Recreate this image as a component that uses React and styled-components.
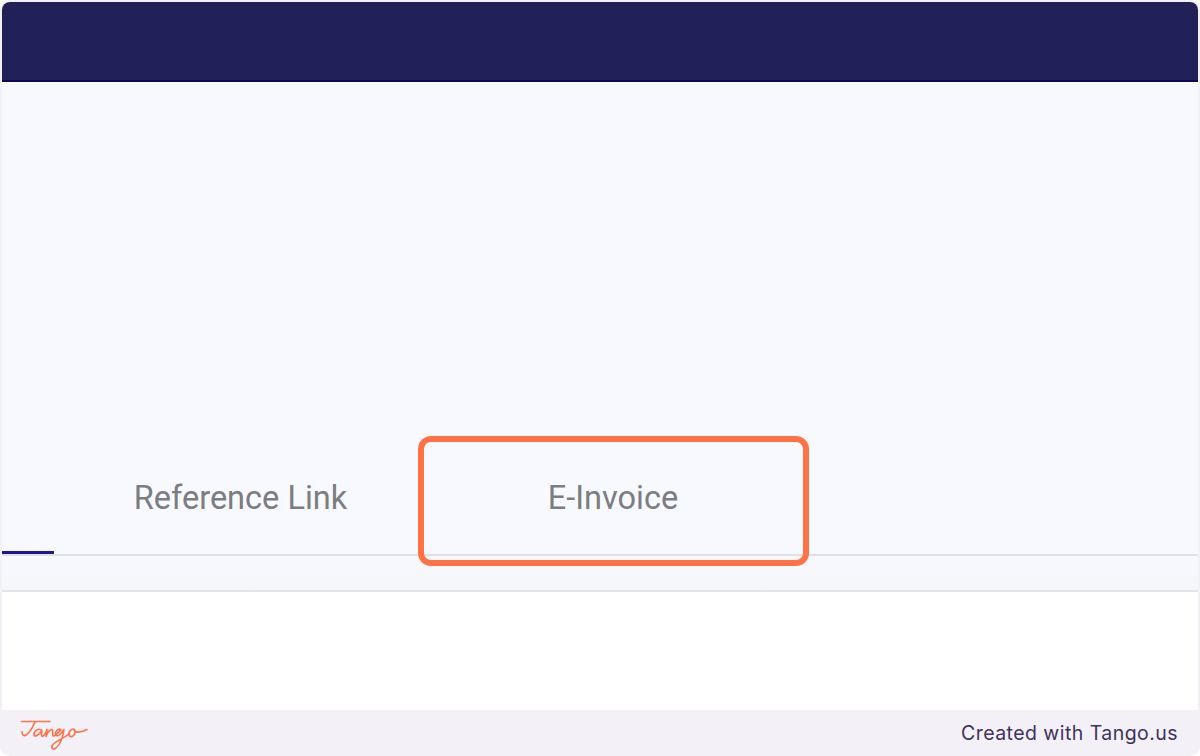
import React from "react";
import styled, { createGlobalStyle } from "styled-components";

const GlobalStyle = createGlobalStyle`
	html, body {
		margin: 0;
		padding: 0;
		background: #ffffff;
	}
`;

const Frame = styled.div`
	width: 1200px;
	height: 756px;
	box-sizing: border-box;
	padding: 2px 2px 0;
	display: flex;
	flex-direction: column;
	background: #f3f1f7;
	border-radius: 10px;
	overflow: hidden;
`;

const Screen = styled.div`
	height: 708px;
	display: flex;
	flex-direction: column;
	background: #ffffff;
	border-radius: 8px 8px 0 0;
	overflow: hidden;
`;

const Header = styled.div`
	height: 78px;
	flex-shrink: 0;
	background: #222059;
	border-bottom: 2px solid #0d0a52;
`;

const Content = styled.div`
	height: 508px;
	flex-shrink: 0;
	display: flex;
	flex-direction: column;
	justify-content: flex-end;
	background: #f8f9fe;
	border-bottom: 2px solid #e3e4e8;
`;

const TabBar = styled.div`
	height: 120px;
	display: flex;
	box-sizing: border-box;
	border-bottom: 2px solid #e0e1e5;
`;

const Tab = styled.div`
	position: relative;
	width: ${(p) => p.$width}px;
	height: 118px;
	display: flex;
	align-items: center;
	justify-content: center;
	padding-top: 5px;
	box-sizing: border-box;
	font-family: Roboto, sans-serif;
	font-size: 32.5px;
	color: #7b7d80;
	border-bottom: ${(p) => (p.$active ? "3px solid #1d1499" : "none")};
`;

const Highlight = styled.div`
	position: absolute;
	top: 0;
	left: -9px;
	width: 391px;
	height: 130px;
	box-sizing: border-box;
	border: 6px solid #ff7245;
	border-radius: 13px;
`;

const Band = styled.div`
	height: 34px;
	background: linear-gradient(#f8f9fe, #f5f6fa);
`;

const Footer = styled.div`
	flex: 1;
	display: flex;
	align-items: center;
	justify-content: space-between;
	padding: 0 20px 0 18px;
`;

const Credit = styled.span`
	font-family: Inter, sans-serif;
	font-size: 19.5px;
	letter-spacing: 0.45px;
	color: #41315c;
`;

const LogoMark = styled.svg`
	margin-top: 6px;
`;

const TangoLogo = () => (
	<LogoMark width="70" height="32" viewBox="0 0 70 32" fill="none" stroke="#ff7245" strokeWidth="1.6" strokeLinecap="round" strokeLinejoin="round">
		<path d="M1.500 1.500 H30" />
		<path d="M15 2 C12.500 8 9 13 6 15 C4 16.500 2 15 2 11.500" />
		<path d="M22 10.500 C19 7.500 14 10.500 14 14.500 C14 18 19 15 22 10.500 C21 14 21 17 23 16 C25 15 26 12 27 9.500 C27 12 26 14 26 16.500 C27 13 30 9 32 9.500 C34 10.500 31 16 34 16 C36 16 38 12 41 10 C38 7.500 34.500 12 36 15 C38 17.500 42 13 44 9.500 C43 16 41 24 36 28 C32 31 30 27 34 23.500 C38 20 44 18 49 14" />
		<path d="M54 9 C50 9 47.500 14 49.500 16 C52.500 18 57 13.500 54 9 C54.500 12 58 14 67 9.500" />
	</LogoMark>
);

const App = () => {
	return (
		<>
			<GlobalStyle />
			<Frame>
				<Screen>
					<Header />
					<Content>
						<TabBar>
							<Tab $width={52} $active />
							<Tab $width={373}>Reference Link</Tab>
							<Tab $width={372}>
								E-Invoice
								<Highlight />
							</Tab>
						</TabBar>
						<Band />
					</Content>
				</Screen>
				<Footer>
					<TangoLogo />
					<Credit>Created with Tango.us</Credit>
				</Footer>
			</Frame>
		</>
	);
};

export default App;
